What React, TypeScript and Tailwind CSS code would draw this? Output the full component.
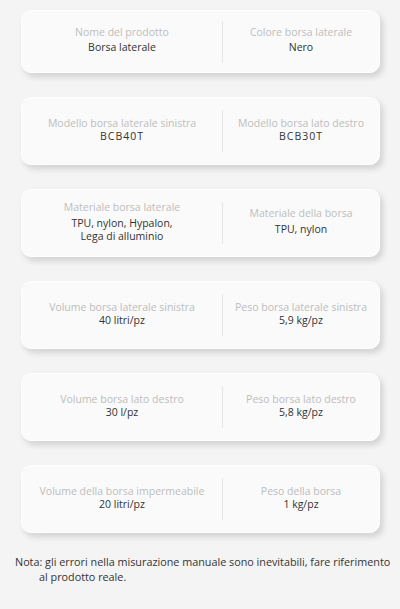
const rows = [
  {
    left: { label: "Nome del prodotto", value: ["Borsa laterale"] },
    right: { label: "Colore borsa laterale", value: ["Nero"] },
    h: "h-[63px]",
    gap: "gap-[2px]",
  },
  {
    left: { label: "Modello borsa laterale sinistra", value: ["BCB40T"], mono: true },
    right: { label: "Modello borsa lato destro", value: ["BCB30T"], mono: true },
    h: "h-[68px]",
    gap: "gap-0",
  },
  {
    left: { label: "Materiale borsa laterale", value: ["TPU, nylon, Hypalon,", "Lega di alluminio"] },
    right: { label: "Materiale della borsa", value: ["TPU, nylon"] },
    h: "h-[68px]",
    gap: "gap-[3px]",
  },
  {
    left: { label: "Volume borsa laterale sinistra", value: ["40 litri/pz"] },
    right: { label: "Peso borsa laterale sinistra", value: ["5,9 kg/pz"] },
    h: "h-[68px]",
    gap: "gap-0",
  },
  {
    left: { label: "Volume borsa lato destro", value: ["30 l/pz"] },
    right: { label: "Peso borsa lato destro", value: ["5,8 kg/pz"] },
    h: "h-[68px]",
    gap: "gap-0",
  },
  {
    left: { label: "Volume della borsa impermeabile", value: ["20 litri/pz"] },
    right: { label: "Peso della borsa", value: ["1 kg/pz"] },
    h: "h-[68px]",
    gap: "gap-0",
  },
];

type Cell = { label: string; value: string[]; mono?: boolean };

function SpecCell({ cell, gap, className }: { cell: Cell; gap: string; className: string }) {
  return (
    <div className={`flex flex-col items-center justify-center pb-[3px] text-center ${gap} ${className}`}>
      <div className="text-[10.5px] leading-[13px] text-[#bdbdbd]">{cell.label}</div>
      <div className={`text-[10.5px] leading-[13px] text-[#333] ${cell.mono ? "tracking-[1px]" : ""}`}>
        {cell.value.map((v) => (
          <div key={v}>{v}</div>
        ))}
      </div>
    </div>
  );
}

export default function App() {
  return (
    <div className="min-h-screen bg-[#f4f4f4] pt-[10px] font-['Open_Sans',sans-serif]">
      <div className="flex w-[380px] flex-col gap-[24px] pl-[21px]">
        {rows.map((r, i) => (
          <div
            key={i}
            className={`flex ${r.h} items-center rounded-[10px] border-[1.5px] border-white bg-[#fafafa] shadow-[3px_4px_6px_rgba(0,0,0,0.14)]`}
          >
            <SpecCell cell={r.left} gap={r.gap} className="w-[200px]" />
            <div className="h-[42px] w-px bg-[#e6e6e6]" />
            <SpecCell cell={r.right} gap={r.gap} className="flex-1" />
          </div>
        ))}
      </div>
      <div className="mt-[21px] text-[10.8px] leading-[15px] text-[#333]">
        <div className="pl-[15px]">Nota: gli errori nella misurazione manuale sono inevitabili, fare riferimento</div>
        <div className="pl-[39px]">al prodotto reale.</div>
      </div>
    </div>
  );
}
